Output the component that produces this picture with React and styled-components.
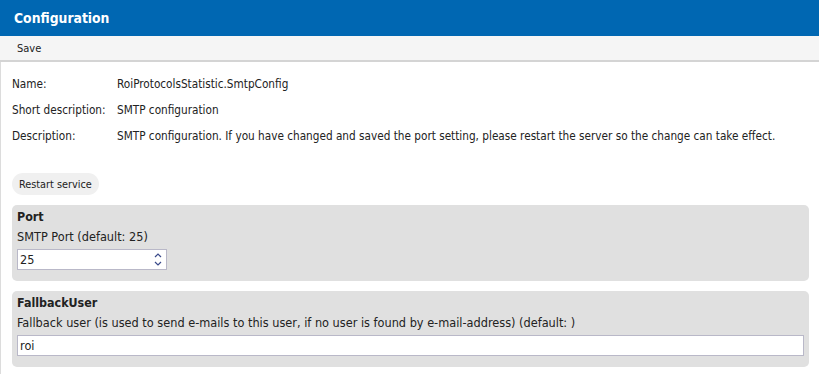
import React from "react";
import styled, { createGlobalStyle } from "styled-components";

const Global = createGlobalStyle`
  html, body { margin: 0; padding: 0; background: #fff; }
  body { font-family: "DejaVu Sans Condensed", "DejaVu Sans", sans-serif; font-size: 12px; color: #222; }
`;

const Page = styled.div`
  width: 819px;
  height: 374px;
  display: flex;
  flex-direction: column;
  overflow: hidden;
`;

const Header = styled.div`
  height: 36px;
  background: #0067b2;
  color: #fff;
  font-weight: bold;
  font-size: 13.8px;
  display: flex;
  align-items: center;
  padding-left: 14px;
`;

const Toolbar = styled.div`
  height: 24px;
  background: #f5f5f5;
  border-bottom: 2px solid #d4d4d4;
  display: flex;
  align-items: center;
  padding-left: 17px;
  font-size: 11px;
`;

const Content = styled.div`
  flex: 1;
  border-left: 1px solid #dcdcdc;
  padding: 9px 10px 0 11px;
  display: flex;
  flex-direction: column;
`;

const InfoGrid = styled.div`
  display: grid;
  grid-template-columns: 105px 1fr;
  grid-auto-rows: 26px;
  align-items: center;
  font-size: 11.7px;
`;

const Label = styled.div``;
const Value = styled.div``;

const PillButton = styled.button`
  align-self: flex-start;
  margin-top: 24px;
  height: 22px;
  padding: 0 7px;
  border: none;
  border-radius: 11px;
  background: #f0f0f0;
  font-family: inherit;
  font-size: 10.8px;
  color: #222;
`;

const Panels = styled.div`
  margin-top: 10px;
  display: flex;
  flex-direction: column;
  gap: 10px;
  width: 797px;
`;

const Panel = styled.div`
  background: #e0e0e0;
  border-radius: 5px;
  padding: 4px 5px 11px;
  display: flex;
  flex-direction: column;
  font-size: 12.6px;
`;

const PanelTitle = styled.div`
  font-weight: bold;
  font-size: 12.4px;
  line-height: 16px;
`;

const PanelDesc = styled.div`
  line-height: 16px;
  margin-top: 4px;
`;

const InputBox = styled.div`
  margin-top: 4px;
  height: 21px;
  box-sizing: border-box;
  width: ${(p) => p.$width || "100%"};
  background: #fff;
  border: 1px solid #b9b8c8;
  display: flex;
  align-items: center;
  padding-left: 2px;
  padding-right: 4px;
`;

const InputText = styled.span`
  flex: 1;
`;

const Spinner = styled.svg`
  display: block;
`;

export default function App() {
  return (
    <Page>
      <Global />
      <Header>Configuration</Header>
      <Toolbar>Save</Toolbar>
      <Content>
        <InfoGrid>
          <Label>Name:</Label>
          <Value>RoiProtocolsStatistic.SmtpConfig</Value>
          <Label>Short description:</Label>
          <Value>SMTP configuration</Value>
          <Label>Description:</Label>
          <Value>
            SMTP configuration. If you have changed and saved the port setting, please restart the server so the change can take effect.
          </Value>
        </InfoGrid>
        <PillButton>Restart service</PillButton>
        <Panels>
          <Panel>
            <PanelTitle>Port</PanelTitle>
            <PanelDesc>SMTP Port (default: 25)</PanelDesc>
            <InputBox $width="150px">
              <InputText>25</InputText>
              <Spinner width="8" height="15" viewBox="0 0 8 15">
                <path d="M1 5 L4 2 L7 5" fill="none" stroke="#3a4a8a" strokeWidth="1.2" />
                <path d="M1 10 L4 13 L7 10" fill="none" stroke="#3a4a8a" strokeWidth="1.2" />
              </Spinner>
            </InputBox>
          </Panel>
          <Panel>
            <PanelTitle>FallbackUser</PanelTitle>
            <PanelDesc>
              Fallback user (is used to send e-mails to this user, if no user is found by e-mail-address) (default: )
            </PanelDesc>
            <InputBox>
              <InputText>roi</InputText>
            </InputBox>
          </Panel>
        </Panels>
      </Content>
    </Page>
  );
}
